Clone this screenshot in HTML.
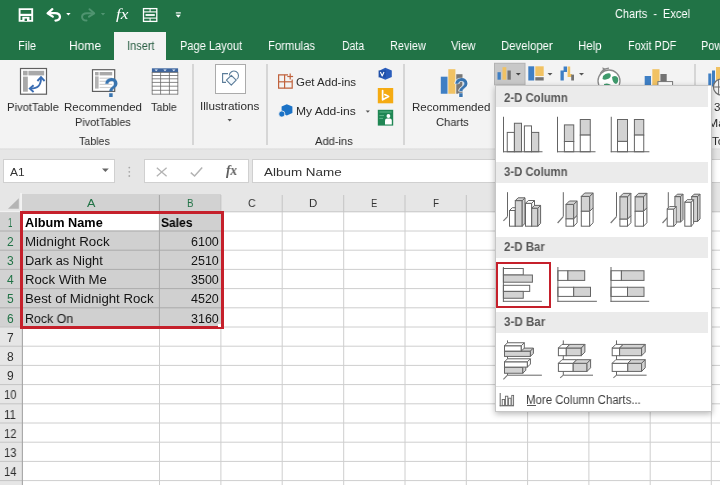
<!DOCTYPE html>
<html lang="en">
<head>
<meta charset="utf-8">
<title>Charts - Excel</title>
<style>
html,body{margin:0;padding:0;}
html{overflow:hidden;}
body{width:720px;height:485px;overflow:hidden;position:relative;background:#fff;font-family:"Liberation Sans",sans-serif;}
.a{position:absolute;}
.t{position:absolute;white-space:pre;line-height:1;transform-origin:0 0;display:block;will-change:transform;}
svg{position:absolute;overflow:visible;}
#top{left:0;top:0;width:720px;height:60px;background:#217346;}
#tab{left:114px;top:32px;width:52px;height:29px;background:#f3f3f3;}
#ribbon{left:0;top:60px;width:720px;height:88px;background:#f3f3f3;}
#rline{left:0;top:147.6px;width:720px;height:2.4px;background:linear-gradient(#ececec,#dedede 55%,#e4e4e4);}
#fbar{left:0;top:150px;width:720px;height:43px;background:#e6e6e6;}
.box{background:#fff;border:1px solid #d0d0d0;box-sizing:border-box;}
.sep{width:2px;background:#d6d6d6;top:64px;height:81px;}
#grid{left:0;top:193px;width:720px;height:292px;background:#fff;}
.vl{width:1px;background:#d9d9d9;top:211px;height:274px;}
.hl{height:1px;background:#d9d9d9;left:22px;width:698px;}
.ch{top:193px;height:18px;background:#e6e6e6;}
.rh{left:0;width:22px;background:#e6e6e6;}
#panel{left:494.5px;top:85.3px;width:217.5px;height:326.5px;background:#fff;border:1px solid #c6c6c6;box-sizing:border-box;box-shadow:0 2px 6px rgba(0,0,0,.28);}
.ph{left:495.5px;width:212px;height:20.8px;background:#ebebeb;}
</style>
</head>
<body>
<div id="top" class="a"></div>
<div id="tab" class="a"></div>
<div id="ribbon" class="a"></div>
<div id="rline" class="a"></div>
<div id="fbar" class="a"></div>

<!-- title + tabs -->
<span class="t" style="left:614.67px;top:8px;font-size:12.5px;color:#fff;transform:scaleX(0.8767);">Charts  -  Excel</span>
<span class="t" style="left:17.66px;top:40px;font-size:12.5px;color:#fff;transform:scaleX(0.8930);">File</span>
<span class="t" style="left:68.62px;top:40px;font-size:12.5px;color:#fff;transform:scaleX(0.9597);">Home</span>
<span class="t" style="left:126.67px;top:40px;font-size:12.5px;color:#2a5f44;transform:scaleX(0.8796);">Insert</span>
<span class="t" style="left:180.17px;top:40px;font-size:12.5px;color:#fff;transform:scaleX(0.8860);">Page Layout</span>
<span class="t" style="left:268.36px;top:40px;font-size:12.5px;color:#fff;transform:scaleX(0.9041);">Formulas</span>
<span class="t" style="left:341.60px;top:40px;font-size:12.5px;color:#fff;transform:scaleX(0.8369);">Data</span>
<span class="t" style="left:390.18px;top:40px;font-size:12.5px;color:#fff;transform:scaleX(0.8732);">Review</span>
<span class="t" style="left:451.15px;top:40px;font-size:12.5px;color:#fff;transform:scaleX(0.9116);">View</span>
<span class="t" style="left:500.96px;top:40px;font-size:12.5px;color:#fff;transform:scaleX(0.9073);">Developer</span>
<span class="t" style="left:577.65px;top:40px;font-size:12.5px;color:#fff;transform:scaleX(0.9176);">Help</span>
<span class="t" style="left:628.18px;top:40px;font-size:12.5px;color:#fff;transform:scaleX(0.8675);">Foxit PDF</span>
<span class="t" style="left:701.27px;top:40px;font-size:12.5px;color:#fff;transform:scaleX(0.8796);">Pow</span>

<!-- ribbon text -->
<span class="t" style="left:7.46px;top:102px;font-size:11.5px;color:#2b2b2b;transform:scaleX(0.9767);">PivotTable</span>
<span class="t" style="left:63.95px;top:102px;font-size:11.5px;color:#2b2b2b;">Recommended</span>
<span class="t" style="left:74.98px;top:117px;font-size:11.5px;color:#2b2b2b;transform:scaleX(0.9493);">PivotTables</span>
<span class="t" style="left:151.48px;top:102px;font-size:11.5px;color:#2b2b2b;transform:scaleX(0.9392);">Table</span>
<span class="t" style="left:78.99px;top:136px;font-size:11.5px;color:#2b2b2b;transform:scaleX(0.9272);">Tables</span>
<span class="t" style="left:199.94px;top:101px;font-size:11.5px;color:#2b2b2b;transform:scaleX(1.0199);">Illustrations</span>
<span class="t" style="left:295.95px;top:77px;font-size:11.5px;color:#2b2b2b;">Get Add-ins</span>
<span class="t" style="left:295.92px;top:106px;font-size:11.5px;color:#2b2b2b;transform:scaleX(1.0516);">My Add-ins</span>
<span class="t" style="left:315.46px;top:136px;font-size:11.5px;color:#2b2b2b;transform:scaleX(0.9699);">Add-ins</span>
<span class="t" style="left:412.45px;top:102px;font-size:11.5px;color:#2b2b2b;transform:scaleX(1.0044);">Recommended</span>
<span class="t" style="left:436.47px;top:117px;font-size:11.5px;color:#2b2b2b;transform:scaleX(0.9691);">Charts</span>
<div class="a sep" style="left:192px"></div>
<div class="a sep" style="left:266px"></div>
<div class="a sep" style="left:403px"></div>
<div class="a sep" style="left:694px;height:24px"></div>

<svg id="ric" width="720" height="160" viewBox="0 0 720 160" style="left:0;top:0"><path d="M19.6 9.1 H32.2 V20.9 H19.6 Z" fill="none" stroke="#fff" stroke-width="1.9" />
<line x1="19.60" y1="14.90" x2="32.20" y2="14.90" stroke="#fff" stroke-width="2.2" />
<rect x="22.30" y="16.80" width="7.20" height="4.20" fill="#fff" stroke="none" stroke-width="0" />
<rect x="24.60" y="18.60" width="2.40" height="2.40" fill="#217346" stroke="none" stroke-width="0" />
<path d="M52.3 9.2 L47.6 13.3 L52.8 16.6" fill="none" stroke="#fff" stroke-width="2.3" stroke-linecap="round" stroke-linejoin="round"/>
<path d="M48.5 13.2 H55 C61.5 13.2 61.5 20.6 55.5 20.6" fill="none" stroke="#fff" stroke-width="2.3" stroke-linecap="round"/>
<polygon points="66.20,13.10 70.60,13.10 68.40,15.50" fill="#fff" stroke="none" stroke-width="0" stroke-linejoin="round" />
<path d="M89.5 9.2 L94.2 13.3 L89 16.6" fill="none" stroke="#4f9470" stroke-width="2" stroke-linecap="round" stroke-linejoin="round"/>
<path d="M93.3 13.2 H87 C80.5 13.2 80.5 20.6 86.5 20.6" fill="none" stroke="#4f9470" stroke-width="2" stroke-linecap="round"/>
<polygon points="100.80,13.10 105.20,13.10 103.00,15.50" fill="#4f9470" stroke="none" stroke-width="0" stroke-linejoin="round" />
<rect x="143.50" y="8.60" width="13.30" height="12.80" fill="none" stroke="#fff" stroke-width="1.3" />
<line x1="143.50" y1="11.90" x2="156.80" y2="11.90" stroke="#fff" stroke-width="1.1" />
<line x1="143.50" y1="18.10" x2="156.80" y2="18.10" stroke="#fff" stroke-width="1.1" />
<line x1="145.50" y1="15.00" x2="154.80" y2="15.00" stroke="#fff" stroke-width="1.8" />
<line x1="150.10" y1="8.60" x2="150.10" y2="11.90" stroke="#fff" stroke-width="1" />
<line x1="150.10" y1="18.10" x2="150.10" y2="21.40" stroke="#fff" stroke-width="1" />
<line x1="175.80" y1="12.90" x2="180.80" y2="12.90" stroke="#fff" stroke-width="1.2" />
<polygon points="175.80,14.80 180.80,14.80 178.30,17.80" fill="#fff" stroke="none" stroke-width="0" stroke-linejoin="round" />
<rect x="20.50" y="68.50" width="26.00" height="25.70" fill="#fff" stroke="#5f5f5f" stroke-width="1.2" />
<rect x="23.00" y="70.80" width="4.60" height="4.60" fill="#a9a9a9" stroke="none" stroke-width="0" />
<rect x="28.40" y="70.80" width="15.80" height="4.60" fill="#a9a9a9" stroke="none" stroke-width="0" />
<rect x="23.00" y="76.60" width="4.80" height="15.10" fill="#a9a9a9" stroke="none" stroke-width="0" />
<path d="M30.6 88.6 C38.5 88.6 41 85 41 78" fill="none" stroke="#3a6db3" stroke-width="1.9" />
<path d="M33.6 85.2 L29.8 88.6 L33.6 92" fill="none" stroke="#3a6db3" stroke-width="1.9" stroke-linejoin="miter"/>
<path d="M37.4 81 L41 77.2 L44.6 81" fill="none" stroke="#3a6db3" stroke-width="1.9" stroke-linejoin="miter"/>
<rect x="92.50" y="69.70" width="22.20" height="21.70" fill="#fff" stroke="#5f5f5f" stroke-width="1.2" />
<rect x="95.00" y="72.00" width="3.60" height="3.40" fill="#a9a9a9" stroke="none" stroke-width="0" />
<rect x="99.60" y="72.00" width="12.60" height="3.40" fill="#a9a9a9" stroke="none" stroke-width="0" />
<rect x="95.00" y="76.40" width="3.60" height="12.20" fill="#b4b4b4" stroke="none" stroke-width="0" />
<line x1="99.60" y1="78.20" x2="112.20" y2="78.20" stroke="#d0d0d0" stroke-width="1.2" />
<line x1="99.60" y1="81.30" x2="112.20" y2="81.30" stroke="#d0d0d0" stroke-width="1.2" />
<line x1="99.60" y1="84.40" x2="112.20" y2="84.40" stroke="#d0d0d0" stroke-width="1.2" />
<line x1="99.60" y1="87.50" x2="112.20" y2="87.50" stroke="#d0d0d0" stroke-width="1.2" />
<rect x="151.90" y="68.30" width="26.20" height="26.00" fill="#fff" stroke="none" stroke-width="0" />
<rect x="151.90" y="68.30" width="26.20" height="4.10" fill="#3d659f" stroke="none" stroke-width="0" />
<polygon points="154.50,69.40 157.90,69.40 156.20,71.20" fill="#e8eef6" stroke="none" stroke-width="0" stroke-linejoin="round" />
<polygon points="163.30,69.40 166.70,69.40 165.00,71.20" fill="#e8eef6" stroke="none" stroke-width="0" stroke-linejoin="round" />
<polygon points="172.10,69.40 175.50,69.40 173.80,71.20" fill="#e8eef6" stroke="none" stroke-width="0" stroke-linejoin="round" />
<line x1="151.90" y1="72.40" x2="178.10" y2="72.40" stroke="#6a6a6a" stroke-width="0.8" />
<line x1="151.90" y1="75.50" x2="178.10" y2="75.50" stroke="#6a6a6a" stroke-width="0.8" />
<line x1="151.90" y1="78.80" x2="178.10" y2="78.80" stroke="#6a6a6a" stroke-width="0.8" />
<line x1="151.90" y1="82.40" x2="178.10" y2="82.40" stroke="#6a6a6a" stroke-width="0.8" />
<line x1="151.90" y1="86.20" x2="178.10" y2="86.20" stroke="#6a6a6a" stroke-width="0.8" />
<line x1="151.90" y1="90.30" x2="178.10" y2="90.30" stroke="#6a6a6a" stroke-width="0.8" />
<line x1="151.90" y1="94.20" x2="178.10" y2="94.20" stroke="#6a6a6a" stroke-width="0.8" />
<line x1="152.20" y1="72.00" x2="152.20" y2="94.40" stroke="#6a6a6a" stroke-width="0.8" />
<line x1="160.60" y1="72.00" x2="160.60" y2="94.40" stroke="#6a6a6a" stroke-width="0.8" />
<line x1="169.40" y1="72.00" x2="169.40" y2="94.40" stroke="#6a6a6a" stroke-width="0.8" />
<line x1="177.80" y1="72.00" x2="177.80" y2="94.40" stroke="#6a6a6a" stroke-width="0.8" />
<rect x="215.50" y="64.50" width="30.00" height="29.00" fill="#fff" stroke="#ababab" stroke-width="1" />
<path d="M228 73.6 H222.6 V82.4 H226" fill="none" stroke="#5b7c99" stroke-width="1.1" />
<path d="M229.3 75.6 A4.6 4.6 0 1 1 236.6 79.4" fill="none" stroke="#5b7c99" stroke-width="1.1" />
<polygon points="231.30,75.30 236.20,80.20 231.30,85.10 226.40,80.20" fill="#f4f9fd" stroke="#5b7c99" stroke-width="1.1" stroke-linejoin="round" />
<polygon points="227.50,119.00 231.90,119.00 229.70,121.40" fill="#555" stroke="none" stroke-width="0" stroke-linejoin="round" />
<path d="M288 74.8 H278.6 V88.2 H292.2 V79.5" fill="none" stroke="#c0623c" stroke-width="1.2" />
<line x1="284.60" y1="74.80" x2="284.60" y2="88.20" stroke="#c0623c" stroke-width="1.2" />
<line x1="278.60" y1="81.80" x2="292.20" y2="81.80" stroke="#c0623c" stroke-width="1.2" />
<line x1="290.20" y1="73.60" x2="290.20" y2="79.40" stroke="#c0623c" stroke-width="1.2" />
<line x1="287.30" y1="76.50" x2="293.10" y2="76.50" stroke="#c0623c" stroke-width="1.2" />
<polygon points="286.80,104.20 292.40,106.60 292.40,113.00 286.80,115.60 281.60,113.00 281.60,106.60" fill="#1b72c6" stroke="none" stroke-width="0" stroke-linejoin="round" />
<circle cx="281.8" cy="114" r="3.1" fill="#1b72c6" stroke="#f3f3f3" stroke-width="0.8"/>
<polygon points="365.70,110.40 369.90,110.40 367.80,112.80" fill="#555" stroke="none" stroke-width="0" stroke-linejoin="round" />
<polygon points="385.30,67.80 391.80,70.50 391.80,77.00 385.30,79.80 380.20,77.40 380.20,70.20" fill="#2a5dbb" stroke="none" stroke-width="0" stroke-linejoin="round" />
<rect x="378.60" y="70.40" width="7.20" height="7.00" fill="#1f4fa8" stroke="none" stroke-width="0" />
<path d="M380.4 72 L382.2 76 L384 72" fill="none" stroke="#fff" stroke-width="1.1" stroke-linejoin="round"/>
<rect x="377.80" y="88.00" width="15.40" height="15.30" fill="#f5ab12" stroke="none" stroke-width="0" />
<path d="M382.6 90.6 V99.8 L388.6 96.6 L384.8 94.6" fill="none" stroke="#fff" stroke-width="1.7" stroke-linejoin="round" stroke-linecap="round"/>
<rect x="377.80" y="109.80" width="15.40" height="15.80" fill="#1f8653" stroke="none" stroke-width="0" />
<line x1="379.40" y1="112.00" x2="391.60" y2="112.00" stroke="#5fb88a" stroke-width="1" />
<line x1="379.40" y1="115.60" x2="384.00" y2="115.60" stroke="#5fb88a" stroke-width="1" />
<line x1="379.40" y1="118.40" x2="383.00" y2="118.40" stroke="#5fb88a" stroke-width="1" />
<circle cx="388.4" cy="116" r="1.9" fill="#fff"/>
<path d="M385 124.6 V120.6 Q385 118.6 387 118.6 H389.8 Q391.8 118.6 391.8 120.6 V124.6 Z" fill="#fff" stroke="none" stroke-width="1" />
<rect x="440.80" y="76.70" width="6.70" height="17.05" fill="#3f7fc4" stroke="none" stroke-width="0" />
<rect x="448.30" y="69.20" width="7.10" height="24.55" fill="#f1c263" stroke="none" stroke-width="0" />
<rect x="456.25" y="74.20" width="6.25" height="19.55" fill="#777" stroke="none" stroke-width="0" />
<rect x="494.50" y="63.30" width="30.50" height="21.50" fill="#c8c8c8" stroke="#b2b2b2" stroke-width="1" />
<rect x="497.50" y="72.20" width="3.30" height="7.50" fill="#3f7fc4" stroke="none" stroke-width="0" />
<rect x="502.50" y="67.20" width="3.80" height="12.50" fill="#f1c263" stroke="none" stroke-width="0" />
<rect x="507.50" y="70.50" width="3.30" height="9.20" fill="#737373" stroke="none" stroke-width="0" />
<polygon points="515.80,73.00 520.80,73.00 518.30,75.60" fill="#444" stroke="none" stroke-width="0" stroke-linejoin="round" />
<rect x="528.30" y="66.30" width="5.90" height="14.20" fill="#3f7fc4" stroke="none" stroke-width="0" />
<rect x="535.30" y="66.30" width="8.40" height="9.70" fill="#f1c263" stroke="none" stroke-width="0" />
<rect x="535.30" y="77.20" width="8.40" height="3.30" fill="#737373" stroke="none" stroke-width="0" />
<polygon points="547.50,73.00 552.50,73.00 550.00,75.60" fill="#555" stroke="none" stroke-width="0" stroke-linejoin="round" />
<path d="M560.5 80.5 V70.6 H563.6 V66.6 H567 V72 H563.8 V80.5 Z" fill="#3f7fc4" stroke="none" stroke-width="1" />
<path d="M567.6 66.6 H570.2 V74 H572 V77 H567.6 Z" fill="#f1c263" stroke="none" stroke-width="1" />
<rect x="571.20" y="74.60" width="2.80" height="5.90" fill="#737373" stroke="none" stroke-width="0" />
<polygon points="579.00,73.00 584.00,73.00 581.50,75.60" fill="#555" stroke="none" stroke-width="0" stroke-linejoin="round" />
<g>
<circle cx="609" cy="81" r="11" fill="#fff" stroke="#8a8a8a" stroke-width="1.3"/>
<path d="M603 76 Q606 72.5 610 73.5 Q612 76 609 78.5 Q605 80.5 602.5 79 Z" fill="#3f9a6c" stroke="none" stroke-width="1" />
<path d="M612 77 Q616 74.5 618 78 Q619 82 616 84 Q612.5 83 612 77 Z" fill="#3f9a6c" stroke="none" stroke-width="1" />
<path d="M604 84 Q608 82.5 611 85 L610 88 H604.5 Z" fill="#3f9a6c" stroke="none" stroke-width="1" />
<path d="M600.2 73.6 Q603.5 68.4 609 68.2" fill="none" stroke="#8a8a8a" stroke-width="1.2" />
<polygon points="602.40,67.20 606.00,69.00 603.00,71.20" fill="#8a8a8a" stroke="none" stroke-width="0" stroke-linejoin="round" />
</g>
<rect x="644.70" y="76.00" width="6.30" height="10.50" fill="#3f7fc4" stroke="none" stroke-width="0" />
<rect x="652.30" y="69.20" width="7.20" height="17.30" fill="#f1c263" stroke="none" stroke-width="0" />
<rect x="660.40" y="74.00" width="6.30" height="8.00" fill="#737373" stroke="none" stroke-width="0" />
<rect x="657.90" y="81.60" width="14.70" height="5.40" fill="#fff" stroke="#777" stroke-width="1" />
<rect x="708.30" y="73.50" width="3.00" height="13.00" fill="#3f7fc4" stroke="none" stroke-width="0" />
<rect x="712.00" y="70.50" width="3.00" height="16.00" fill="#3f7fc4" stroke="none" stroke-width="0" />
<rect x="716.00" y="67.00" width="4.00" height="13.00" fill="#f1c263" stroke="none" stroke-width="0" />
<circle cx="721.6" cy="87" r="8.2" fill="#f2f2f2" stroke="#6e6e6e" stroke-width="1.2"/>
<line x1="714.00" y1="87.00" x2="720.00" y2="87.00" stroke="#6e6e6e" stroke-width="1" />
<line x1="718.60" y1="80.00" x2="718.60" y2="94.00" stroke="#6e6e6e" stroke-width="1" /></svg>
<span class="t" style="left:104.44px;top:74px;font-size:28px;color:#3874b0;font-weight:700;transform:scaleX(0.8660);">?</span>
<span class="t" style="left:454.04px;top:74px;font-size:28px;color:#3874b0;font-weight:700;transform:scaleX(0.8660);text-shadow:0 0 1px #fff,0 0 1px #fff,1px 0 0 #fff,-1px 0 0 #fff;">?</span>
<span class="t" style="left:714.27px;top:102px;font-size:11.5px;color:#2b2b2b;transform:scaleX(0.9541);">3D</span>
<span class="t" style="left:708.41px;top:118px;font-size:11.5px;color:#2b2b2b;transform:scaleX(1.0649);">Map</span>
<span class="t" style="left:712.05px;top:136px;font-size:11.5px;color:#2b2b2b;">Tours</span>
<span class="t" style="left:115.57px;top:7px;font-size:15px;color:#fff;transform:scaleX(1.1526);font-family:'Liberation Serif',serif;font-style:italic;">fx</span>
<!-- formula bar -->
<div class="a box" style="left:3.3px;top:159px;width:111.4px;height:24.4px"></div>
<div class="a box" style="left:144.2px;top:159px;width:105px;height:24.4px"></div>
<div class="a box" style="left:252.4px;top:159px;width:470px;height:24.4px"></div>
<span class="t" style="left:9.83px;top:167px;font-size:11.5px;color:#333;transform:scaleX(1.0391);">A1</span>
<span class="t" style="left:263.86px;top:167px;font-size:11.5px;color:#333;transform:scaleX(1.1679);">Album Name</span>

<svg width="260" height="40" viewBox="0 150 260 40" style="left:0;top:150px">
<polygon points="102,168.4 108.8,168.4 105.4,172" fill="#666"/>
<circle cx="129.3" cy="167.6" r="0.9" fill="#a8a8a8"/><circle cx="129.3" cy="171.8" r="0.9" fill="#a8a8a8"/><circle cx="129.3" cy="176" r="0.9" fill="#a8a8a8"/>
<path d="M156.8 167.8 L166.6 176.2 M166.6 167.8 L156.8 176.2" stroke="#b3b3b3" stroke-width="1.3" fill="none"/>
<path d="M190.8 172.6 L194.6 176 L202.2 167.4" stroke="#b3b3b3" stroke-width="1.5" fill="none"/>
</svg>
<span class="t" style="left:225.67px;top:164px;font-size:14px;color:#5a5a5a;font-weight:700;transform:scaleX(0.9346);font-family:'Liberation Serif',serif;font-style:italic;">fx</span>
<!-- grid -->
<div id="grid" class="a"></div>
<div class="a" style="left:0;top:193px;width:720px;height:19px;background:#e6e6e6"></div>
<div class="a" style="left:22px;top:193.5px;width:199px;height:18.5px;background:#d2d2d2"></div>
<div class="a" style="left:0;top:212px;width:22px;height:273px;background:#e6e6e6"></div>
<div class="a" style="left:0;top:212px;width:22px;height:115.0px;background:#d2d2d2"></div>
<div class="a" style="left:22px;top:212px;width:199px;height:115.0px;background:#d0d0d0"></div>
<div class="a" style="left:22px;top:212px;width:137.5px;height:19.0px;background:#fff"></div>
<svg width="720" height="292" viewBox="0 193 720 292" style="left:0;top:193px">
<polygon points="8,208.8 18.8,208.8 18.8,198.2" fill="#b4b4b4"/>
<line x1="21" y1="193" x2="21" y2="211" stroke="#f6f6f6" stroke-width="1.4"/>
<line x1="159.5" y1="212" x2="159.5" y2="485" stroke="#cecece" stroke-width="1"/>
<line x1="159.5" y1="195" x2="159.5" y2="212" stroke="#c4c4c4" stroke-width="1"/>
<line x1="220.9" y1="212" x2="220.9" y2="485" stroke="#cecece" stroke-width="1"/>
<line x1="220.9" y1="195" x2="220.9" y2="212" stroke="#c4c4c4" stroke-width="1"/>
<line x1="282.2" y1="212" x2="282.2" y2="485" stroke="#cecece" stroke-width="1"/>
<line x1="282.2" y1="195" x2="282.2" y2="212" stroke="#c4c4c4" stroke-width="1"/>
<line x1="343.7" y1="212" x2="343.7" y2="485" stroke="#cecece" stroke-width="1"/>
<line x1="343.7" y1="195" x2="343.7" y2="212" stroke="#c4c4c4" stroke-width="1"/>
<line x1="405.0" y1="212" x2="405.0" y2="485" stroke="#cecece" stroke-width="1"/>
<line x1="405.0" y1="195" x2="405.0" y2="212" stroke="#c4c4c4" stroke-width="1"/>
<line x1="466.3" y1="212" x2="466.3" y2="485" stroke="#cecece" stroke-width="1"/>
<line x1="466.3" y1="195" x2="466.3" y2="212" stroke="#c4c4c4" stroke-width="1"/>
<line x1="527.6" y1="212" x2="527.6" y2="485" stroke="#cecece" stroke-width="1"/>
<line x1="527.6" y1="195" x2="527.6" y2="212" stroke="#c4c4c4" stroke-width="1"/>
<line x1="588.9" y1="212" x2="588.9" y2="485" stroke="#cecece" stroke-width="1"/>
<line x1="588.9" y1="195" x2="588.9" y2="212" stroke="#c4c4c4" stroke-width="1"/>
<line x1="650.2" y1="212" x2="650.2" y2="485" stroke="#cecece" stroke-width="1"/>
<line x1="650.2" y1="195" x2="650.2" y2="212" stroke="#c4c4c4" stroke-width="1"/>
<line x1="711.3" y1="212" x2="711.3" y2="485" stroke="#cecece" stroke-width="1"/>
<line x1="711.3" y1="195" x2="711.3" y2="212" stroke="#c4c4c4" stroke-width="1"/>
<line x1="22" y1="231.00" x2="720" y2="231.00" stroke="#cecece" stroke-width="1"/>
<line x1="0" y1="231.00" x2="22" y2="231.00" stroke="#c4c4c4" stroke-width="1"/>
<line x1="22" y1="250.20" x2="720" y2="250.20" stroke="#cecece" stroke-width="1"/>
<line x1="0" y1="250.20" x2="22" y2="250.20" stroke="#c4c4c4" stroke-width="1"/>
<line x1="22" y1="269.40" x2="720" y2="269.40" stroke="#cecece" stroke-width="1"/>
<line x1="0" y1="269.40" x2="22" y2="269.40" stroke="#c4c4c4" stroke-width="1"/>
<line x1="22" y1="288.60" x2="720" y2="288.60" stroke="#cecece" stroke-width="1"/>
<line x1="0" y1="288.60" x2="22" y2="288.60" stroke="#c4c4c4" stroke-width="1"/>
<line x1="22" y1="307.80" x2="720" y2="307.80" stroke="#cecece" stroke-width="1"/>
<line x1="0" y1="307.80" x2="22" y2="307.80" stroke="#c4c4c4" stroke-width="1"/>
<line x1="22" y1="327.00" x2="720" y2="327.00" stroke="#cecece" stroke-width="1"/>
<line x1="0" y1="327.00" x2="22" y2="327.00" stroke="#c4c4c4" stroke-width="1"/>
<line x1="22" y1="346.20" x2="720" y2="346.20" stroke="#cecece" stroke-width="1"/>
<line x1="0" y1="346.20" x2="22" y2="346.20" stroke="#c4c4c4" stroke-width="1"/>
<line x1="22" y1="365.40" x2="720" y2="365.40" stroke="#cecece" stroke-width="1"/>
<line x1="0" y1="365.40" x2="22" y2="365.40" stroke="#c4c4c4" stroke-width="1"/>
<line x1="22" y1="384.60" x2="720" y2="384.60" stroke="#cecece" stroke-width="1"/>
<line x1="0" y1="384.60" x2="22" y2="384.60" stroke="#c4c4c4" stroke-width="1"/>
<line x1="22" y1="403.80" x2="720" y2="403.80" stroke="#cecece" stroke-width="1"/>
<line x1="0" y1="403.80" x2="22" y2="403.80" stroke="#c4c4c4" stroke-width="1"/>
<line x1="22" y1="423.00" x2="720" y2="423.00" stroke="#cecece" stroke-width="1"/>
<line x1="0" y1="423.00" x2="22" y2="423.00" stroke="#c4c4c4" stroke-width="1"/>
<line x1="22" y1="442.20" x2="720" y2="442.20" stroke="#cecece" stroke-width="1"/>
<line x1="0" y1="442.20" x2="22" y2="442.20" stroke="#c4c4c4" stroke-width="1"/>
<line x1="22" y1="461.40" x2="720" y2="461.40" stroke="#cecece" stroke-width="1"/>
<line x1="0" y1="461.40" x2="22" y2="461.40" stroke="#c4c4c4" stroke-width="1"/>
<line x1="22" y1="480.60" x2="720" y2="480.60" stroke="#cecece" stroke-width="1"/>
<line x1="0" y1="480.60" x2="22" y2="480.60" stroke="#c4c4c4" stroke-width="1"/>
<line x1="22" y1="499.80" x2="720" y2="499.80" stroke="#cecece" stroke-width="1"/>
<line x1="0" y1="499.80" x2="22" y2="499.80" stroke="#c4c4c4" stroke-width="1"/>
<line x1="22" y1="211.8" x2="720" y2="211.8" stroke="#c6c6c6" stroke-width="1"/>
<line x1="0" y1="211.4" x2="20" y2="211.4" stroke="#f2f2f2" stroke-width="1.4"/>
<line x1="22" y1="231.00" x2="221" y2="231.00" stroke="#acacac" stroke-width="1"/>
<line x1="0" y1="231.00" x2="20" y2="231.00" stroke="#b4b4b4" stroke-width="1"/>
<line x1="22" y1="250.20" x2="221" y2="250.20" stroke="#acacac" stroke-width="1"/>
<line x1="0" y1="250.20" x2="20" y2="250.20" stroke="#b4b4b4" stroke-width="1"/>
<line x1="22" y1="269.40" x2="221" y2="269.40" stroke="#acacac" stroke-width="1"/>
<line x1="0" y1="269.40" x2="20" y2="269.40" stroke="#b4b4b4" stroke-width="1"/>
<line x1="22" y1="288.60" x2="221" y2="288.60" stroke="#acacac" stroke-width="1"/>
<line x1="0" y1="288.60" x2="20" y2="288.60" stroke="#b4b4b4" stroke-width="1"/>
<line x1="22" y1="307.80" x2="221" y2="307.80" stroke="#acacac" stroke-width="1"/>
<line x1="0" y1="307.80" x2="20" y2="307.80" stroke="#b4b4b4" stroke-width="1"/>
<line x1="159.4" y1="195" x2="159.4" y2="327.0" stroke="#a6a6a6" stroke-width="1"/>
<line x1="22.4" y1="327.0" x2="22.4" y2="485" stroke="#a6a6a6" stroke-width="1.1"/>
</svg>
<span class="t" style="left:86.59px;top:198px;font-size:11.5px;color:#217346;transform:scaleX(1.0986);">A</span>
<span class="t" style="left:186.82px;top:198px;font-size:11.5px;color:#217346;transform:scaleX(0.8639);">B</span>
<span class="t" style="left:247.69px;top:198px;font-size:11.5px;color:#333;transform:scaleX(0.9177);">C</span>
<span class="t" style="left:308.76px;top:198px;font-size:11.5px;color:#333;transform:scaleX(0.9778);">D</span>
<span class="t" style="left:371.25px;top:198px;font-size:11.5px;color:#333;transform:scaleX(0.8118);">E</span>
<span class="t" style="left:432.53px;top:198px;font-size:11.5px;color:#333;transform:scaleX(0.8573);">F</span>
<span class="t" style="left:496.18px;top:198px;font-size:11.5px;color:#333;transform:scaleX(0.9413);">G</span>
<span class="t" style="left:554.06px;top:198px;font-size:11.5px;color:#333;transform:scaleX(0.9778);">H</span>
<span class="t" style="left:618.01px;top:198px;font-size:11.5px;color:#333;transform:scaleX(0.8829);">I</span>
<span class="t" style="left:678.34px;top:198px;font-size:11.5px;color:#333;transform:scaleX(0.8397);">J</span>
<span class="t" style="left:8.33px;top:217px;font-size:12px;color:#217346;transform:scaleX(0.6376);">1</span>
<span class="t" style="left:7.04px;top:236px;font-size:12px;color:#217346;transform:scaleX(0.9666);">2</span>
<span class="t" style="left:7.04px;top:255px;font-size:12px;color:#217346;transform:scaleX(0.9666);">3</span>
<span class="t" style="left:7.04px;top:274px;font-size:12px;color:#217346;transform:scaleX(0.9666);">4</span>
<span class="t" style="left:7.04px;top:293px;font-size:12px;color:#217346;transform:scaleX(0.9666);">5</span>
<span class="t" style="left:7.04px;top:313px;font-size:12px;color:#217346;transform:scaleX(0.9666);">6</span>
<span class="t" style="left:7.04px;top:332px;font-size:12px;color:#2e2e2e;transform:scaleX(0.9666);">7</span>
<span class="t" style="left:7.04px;top:351px;font-size:12px;color:#2e2e2e;transform:scaleX(0.9666);">8</span>
<span class="t" style="left:7.04px;top:370px;font-size:12px;color:#2e2e2e;transform:scaleX(0.9666);">9</span>
<span class="t" style="left:4.06px;top:389px;font-size:12px;color:#2e2e2e;transform:scaleX(0.9330);">10</span>
<span class="t" style="left:4.35px;top:409px;font-size:12px;color:#2e2e2e;transform:scaleX(0.9515);">11</span>
<span class="t" style="left:4.06px;top:428px;font-size:12px;color:#2e2e2e;transform:scaleX(0.9330);">12</span>
<span class="t" style="left:4.06px;top:447px;font-size:12px;color:#2e2e2e;transform:scaleX(0.9330);">13</span>
<span class="t" style="left:4.06px;top:466px;font-size:12px;color:#2e2e2e;transform:scaleX(0.9330);">14</span>
<div class="a" style="left:20px;top:210.7px;width:203.7px;height:118.8px;border:3px solid #c5202b;box-sizing:border-box"></div>
<div class="a" style="left:218.2px;top:324.2px;width:2.6px;height:2.4px;background:#fff"></div>

<!-- cell text -->
<span class="t" style="left:24.79px;top:217px;font-size:12.5px;color:#000;font-weight:700;transform:scaleX(1.0169);">Album Name</span>
<span class="t" style="left:161.42px;top:217px;font-size:12.5px;color:#000;font-weight:700;transform:scaleX(0.9641);">Sales</span>
<span class="t" style="left:24.66px;top:236px;font-size:12.5px;color:#141414;transform:scaleX(1.0681);">Midnight Rock</span>
<span class="t" style="left:24.68px;top:255px;font-size:12.5px;color:#141414;transform:scaleX(1.0273);">Dark as Night</span>
<span class="t" style="left:24.67px;top:274px;font-size:12.5px;color:#141414;transform:scaleX(1.0527);">Rock With Me</span>
<span class="t" style="left:24.67px;top:293px;font-size:12.5px;color:#141414;transform:scaleX(1.0576);">Best of Midnight Rock</span>
<span class="t" style="left:24.71px;top:313px;font-size:12.5px;color:#141414;transform:scaleX(0.9889);">Rock On</span>
<span class="t" style="left:191.41px;top:236px;font-size:12.5px;color:#141414;transform:scaleX(0.9888);">6100</span>
<span class="t" style="left:191.41px;top:255px;font-size:12.5px;color:#141414;transform:scaleX(0.9888);">2510</span>
<span class="t" style="left:191.41px;top:274px;font-size:12.5px;color:#141414;transform:scaleX(0.9888);">3500</span>
<span class="t" style="left:191.41px;top:293px;font-size:12.5px;color:#141414;transform:scaleX(0.9888);">4520</span>
<span class="t" style="left:191.41px;top:313px;font-size:12.5px;color:#141414;transform:scaleX(0.9888);">3160</span>

<!-- panel -->
<div id="panel" class="a"></div>
<div class="a ph" style="top:86px;height:21.3px"></div>
<div class="a ph" style="top:162px"></div>
<div class="a ph" style="top:237px"></div>
<div class="a ph" style="top:311.8px"></div>
<span class="t" style="left:504.05px;top:92px;font-size:12px;color:#585858;font-weight:700;transform:scaleX(0.9468);">2-D Column</span>
<span class="t" style="left:504.26px;top:166px;font-size:12px;color:#585858;font-weight:700;transform:scaleX(0.9439);">3-D Column</span>
<span class="t" style="left:504.25px;top:241px;font-size:12px;color:#585858;font-weight:700;transform:scaleX(0.9573);">2-D Bar</span>
<span class="t" style="left:504.24px;top:316px;font-size:12px;color:#585858;font-weight:700;transform:scaleX(0.9667);">3-D Bar</span>
<div class="a" style="left:496px;top:386px;width:215px;height:1px;background:#e1e1e1"></div>
<span class="t" style="left:526.25px;top:394px;font-size:12px;color:#3c3c3c;transform:scaleX(0.9516);">More Column Charts...</span>
<div class="a" style="left:527px;top:405px;width:9.4px;height:1px;background:#555"></div>
<div class="a" style="left:496px;top:262px;width:55px;height:45.6px;border:2.2px solid #c5202b;box-sizing:border-box"></div>
<svg id="pic" width="720" height="485" viewBox="0 0 720 485" style="left:0;top:0"><rect x="507.25" y="132.40" width="7.15" height="19.35" fill="#fff" stroke="#646464" stroke-width="1" />
<rect x="514.40" y="123.25" width="7.10" height="28.50" fill="#d3d3d3" stroke="#646464" stroke-width="1" />
<rect x="524.40" y="125.90" width="7.10" height="25.85" fill="#fff" stroke="#646464" stroke-width="1" />
<rect x="531.50" y="132.40" width="7.25" height="19.35" fill="#d3d3d3" stroke="#646464" stroke-width="1" />
<line x1="503.50" y1="116.75" x2="503.50" y2="152.25" stroke="#646464" stroke-width="1" />
<line x1="503.00" y1="151.75" x2="542.50" y2="151.75" stroke="#646464" stroke-width="1" />
<rect x="564.40" y="124.90" width="9.35" height="16.60" fill="#d3d3d3" stroke="#646464" stroke-width="1" />
<rect x="564.40" y="141.50" width="9.35" height="10.25" fill="#fff" stroke="#646464" stroke-width="1" />
<rect x="580.25" y="119.50" width="10.00" height="15.60" fill="#d3d3d3" stroke="#646464" stroke-width="1" />
<rect x="580.25" y="135.10" width="10.00" height="16.65" fill="#fff" stroke="#646464" stroke-width="1" />
<line x1="557.50" y1="116.75" x2="557.50" y2="152.25" stroke="#646464" stroke-width="1" />
<line x1="557.00" y1="151.75" x2="595.50" y2="151.75" stroke="#646464" stroke-width="1" />
<rect x="617.50" y="119.50" width="10.00" height="21.90" fill="#d3d3d3" stroke="#646464" stroke-width="1" />
<rect x="617.50" y="141.40" width="10.00" height="10.35" fill="#fff" stroke="#646464" stroke-width="1" />
<rect x="634.40" y="119.50" width="9.35" height="15.60" fill="#d3d3d3" stroke="#646464" stroke-width="1" />
<rect x="634.40" y="135.10" width="9.35" height="16.65" fill="#fff" stroke="#646464" stroke-width="1" />
<line x1="611.25" y1="116.75" x2="611.25" y2="152.25" stroke="#646464" stroke-width="1" />
<line x1="610.75" y1="151.75" x2="649.40" y2="151.75" stroke="#646464" stroke-width="1" />
<line x1="507.50" y1="192.20" x2="507.50" y2="216.60" stroke="#666" stroke-width="1" />
<line x1="507.50" y1="216.60" x2="503.40" y2="220.80" stroke="#777" stroke-width="1.2" />
<rect x="509.50" y="210.50" width="5.80" height="15.70" fill="#fff" stroke="#646464" stroke-width="1" />
<polygon points="515.30,210.50 518.10,207.70 518.10,223.40 515.30,226.20" fill="#fff" stroke="#646464" stroke-width="1" stroke-linejoin="round" />
<polygon points="509.50,210.50 512.30,207.70 518.10,207.70 515.30,210.50" fill="#fff" stroke="#646464" stroke-width="1" stroke-linejoin="round" />
<rect x="515.30" y="200.60" width="6.90" height="25.60" fill="#d3d3d3" stroke="#646464" stroke-width="1" />
<polygon points="522.20,200.60 525.00,197.80 525.00,223.40 522.20,226.20" fill="#d3d3d3" stroke="#646464" stroke-width="1" stroke-linejoin="round" />
<polygon points="515.30,200.60 518.10,197.80 525.00,197.80 522.20,200.60" fill="#d3d3d3" stroke="#646464" stroke-width="1" stroke-linejoin="round" />
<rect x="525.50" y="203.30" width="6.20" height="22.90" fill="#fff" stroke="#646464" stroke-width="1" />
<polygon points="531.70,203.30 534.50,200.50 534.50,223.40 531.70,226.20" fill="#fff" stroke="#646464" stroke-width="1" stroke-linejoin="round" />
<polygon points="525.50,203.30 528.30,200.50 534.50,200.50 531.70,203.30" fill="#fff" stroke="#646464" stroke-width="1" stroke-linejoin="round" />
<rect x="531.70" y="208.20" width="6.10" height="18.00" fill="#d3d3d3" stroke="#646464" stroke-width="1" />
<polygon points="537.80,208.20 540.60,205.40 540.60,223.40 537.80,226.20" fill="#d3d3d3" stroke="#646464" stroke-width="1" stroke-linejoin="round" />
<polygon points="531.70,208.20 534.50,205.40 540.60,205.40 537.80,208.20" fill="#d3d3d3" stroke="#646464" stroke-width="1" stroke-linejoin="round" />
<line x1="563.30" y1="192.20" x2="563.30" y2="216.60" stroke="#666" stroke-width="1" />
<line x1="563.30" y1="216.60" x2="557.60" y2="223.00" stroke="#777" stroke-width="1.2" />
<rect x="566.00" y="204.40" width="7.70" height="14.50" fill="#d3d3d3" stroke="#646464" stroke-width="1" />
<rect x="566.00" y="218.90" width="7.70" height="7.30" fill="#fff" stroke="#646464" stroke-width="1" />
<polygon points="573.70,204.40 577.10,201.00 577.10,215.50 573.70,218.90" fill="#d3d3d3" stroke="#646464" stroke-width="1" stroke-linejoin="round" />
<polygon points="573.70,218.90 577.10,215.50 577.10,222.80 573.70,226.20" fill="#fff" stroke="#646464" stroke-width="1" stroke-linejoin="round" />
<polygon points="566.00,204.40 569.40,201.00 577.10,201.00 573.70,204.40" fill="#d3d3d3" stroke="#646464" stroke-width="1" stroke-linejoin="round" />
<rect x="581.30" y="196.40" width="8.40" height="14.90" fill="#d3d3d3" stroke="#646464" stroke-width="1" />
<rect x="581.30" y="211.30" width="8.40" height="14.90" fill="#fff" stroke="#646464" stroke-width="1" />
<polygon points="589.70,196.40 593.10,193.00 593.10,207.90 589.70,211.30" fill="#d3d3d3" stroke="#646464" stroke-width="1" stroke-linejoin="round" />
<polygon points="589.70,211.30 593.10,207.90 593.10,222.80 589.70,226.20" fill="#fff" stroke="#646464" stroke-width="1" stroke-linejoin="round" />
<polygon points="581.30,196.40 584.70,193.00 593.10,193.00 589.70,196.40" fill="#d3d3d3" stroke="#646464" stroke-width="1" stroke-linejoin="round" />
<line x1="616.50" y1="192.20" x2="616.50" y2="216.60" stroke="#666" stroke-width="1" />
<line x1="616.50" y1="216.60" x2="610.70" y2="223.00" stroke="#777" stroke-width="1.2" />
<rect x="619.90" y="196.75" width="7.60" height="22.45" fill="#d3d3d3" stroke="#646464" stroke-width="1" />
<rect x="619.90" y="219.20" width="7.60" height="7.00" fill="#fff" stroke="#646464" stroke-width="1" />
<polygon points="627.50,196.75 630.90,193.35 630.90,215.80 627.50,219.20" fill="#d3d3d3" stroke="#646464" stroke-width="1" stroke-linejoin="round" />
<polygon points="627.50,219.20 630.90,215.80 630.90,222.80 627.50,226.20" fill="#fff" stroke="#646464" stroke-width="1" stroke-linejoin="round" />
<polygon points="619.90,196.75 623.30,193.35 630.90,193.35 627.50,196.75" fill="#d3d3d3" stroke="#646464" stroke-width="1" stroke-linejoin="round" />
<rect x="635.10" y="196.75" width="8.40" height="14.55" fill="#d3d3d3" stroke="#646464" stroke-width="1" />
<rect x="635.10" y="211.30" width="8.40" height="14.90" fill="#fff" stroke="#646464" stroke-width="1" />
<polygon points="643.50,196.75 646.90,193.35 646.90,207.90 643.50,211.30" fill="#d3d3d3" stroke="#646464" stroke-width="1" stroke-linejoin="round" />
<polygon points="643.50,211.30 646.90,207.90 646.90,222.80 643.50,226.20" fill="#fff" stroke="#646464" stroke-width="1" stroke-linejoin="round" />
<polygon points="635.10,196.75 638.50,193.35 646.90,193.35 643.50,196.75" fill="#d3d3d3" stroke="#646464" stroke-width="1" stroke-linejoin="round" />
<line x1="668.30" y1="192.20" x2="668.30" y2="216.60" stroke="#666" stroke-width="1" />
<line x1="668.30" y1="216.60" x2="662.50" y2="223.00" stroke="#777" stroke-width="1.2" />
<rect x="674.90" y="196.60" width="5.70" height="25.40" fill="#d3d3d3" stroke="#646464" stroke-width="1" />
<polygon points="680.60,196.60 683.00,194.20 683.00,219.60 680.60,222.00" fill="#d3d3d3" stroke="#646464" stroke-width="1" stroke-linejoin="round" />
<polygon points="674.90,196.60 677.30,194.20 683.00,194.20 680.60,196.60" fill="#d3d3d3" stroke="#646464" stroke-width="1" stroke-linejoin="round" />
<rect x="691.70" y="196.60" width="5.90" height="24.80" fill="#d3d3d3" stroke="#646464" stroke-width="1" />
<polygon points="697.60,196.60 700.00,194.20 700.00,219.00 697.60,221.40" fill="#d3d3d3" stroke="#646464" stroke-width="1" stroke-linejoin="round" />
<polygon points="691.70,196.60 694.10,194.20 700.00,194.20 697.60,196.60" fill="#d3d3d3" stroke="#646464" stroke-width="1" stroke-linejoin="round" />
<rect x="667.20" y="209.00" width="6.60" height="17.20" fill="#fff" stroke="#646464" stroke-width="1" />
<polygon points="673.80,209.00 676.20,206.60 676.20,223.80 673.80,226.20" fill="#fff" stroke="#646464" stroke-width="1" stroke-linejoin="round" />
<polygon points="667.20,209.00 669.60,206.60 676.20,206.60 673.80,209.00" fill="#fff" stroke="#646464" stroke-width="1" stroke-linejoin="round" />
<rect x="684.80" y="202.10" width="6.40" height="24.10" fill="#fff" stroke="#646464" stroke-width="1" />
<polygon points="691.20,202.10 693.60,199.70 693.60,223.80 691.20,226.20" fill="#fff" stroke="#646464" stroke-width="1" stroke-linejoin="round" />
<polygon points="684.80,202.10 687.20,199.70 693.60,199.70 691.20,202.10" fill="#fff" stroke="#646464" stroke-width="1" stroke-linejoin="round" />
<rect x="503.40" y="268.50" width="19.85" height="6.50" fill="#fff" stroke="#646464" stroke-width="1" />
<rect x="503.40" y="275.00" width="29.00" height="7.20" fill="#d3d3d3" stroke="#646464" stroke-width="1" />
<rect x="503.40" y="285.30" width="26.30" height="6.10" fill="#fff" stroke="#646464" stroke-width="1" />
<rect x="503.40" y="291.40" width="19.85" height="6.85" fill="#d3d3d3" stroke="#646464" stroke-width="1" />
<line x1="503.40" y1="267.00" x2="503.40" y2="301.80" stroke="#646464" stroke-width="1" />
<line x1="502.90" y1="301.30" x2="541.90" y2="301.30" stroke="#646464" stroke-width="1" />
<rect x="557.90" y="270.75" width="10.00" height="9.65" fill="#fff" stroke="#646464" stroke-width="1" />
<rect x="567.90" y="270.75" width="16.80" height="9.65" fill="#d3d3d3" stroke="#646464" stroke-width="1" />
<rect x="557.90" y="287.25" width="15.80" height="9.15" fill="#fff" stroke="#646464" stroke-width="1" />
<rect x="573.70" y="287.25" width="16.80" height="9.15" fill="#d3d3d3" stroke="#646464" stroke-width="1" />
<line x1="557.90" y1="267.00" x2="557.90" y2="301.80" stroke="#646464" stroke-width="1" />
<line x1="557.40" y1="301.30" x2="596.90" y2="301.30" stroke="#646464" stroke-width="1" />
<rect x="611.00" y="270.75" width="10.40" height="9.65" fill="#fff" stroke="#646464" stroke-width="1" />
<rect x="621.40" y="270.75" width="22.60" height="9.65" fill="#d3d3d3" stroke="#646464" stroke-width="1" />
<rect x="611.00" y="287.25" width="16.50" height="9.15" fill="#fff" stroke="#646464" stroke-width="1" />
<rect x="627.50" y="287.25" width="16.50" height="9.15" fill="#d3d3d3" stroke="#646464" stroke-width="1" />
<line x1="611.00" y1="267.00" x2="611.00" y2="301.80" stroke="#646464" stroke-width="1" />
<line x1="610.50" y1="301.30" x2="649.20" y2="301.30" stroke="#646464" stroke-width="1" />
<line x1="507.50" y1="340.40" x2="507.50" y2="375.20" stroke="#666" stroke-width="1" />
<line x1="507.50" y1="375.20" x2="541.90" y2="375.20" stroke="#666" stroke-width="1" />
<line x1="507.50" y1="375.20" x2="503.40" y2="379.40" stroke="#777" stroke-width="1.1" />
<rect x="504.50" y="367.10" width="18.30" height="6.15" fill="#d3d3d3" stroke="#646464" stroke-width="1" />
<polygon points="504.50,367.10 507.50,364.10 525.80,364.10 522.80,367.10" fill="#d3d3d3" stroke="#646464" stroke-width="1" stroke-linejoin="round" />
<polygon points="522.80,367.10 525.80,364.10 525.80,370.25 522.80,373.25" fill="#d3d3d3" stroke="#646464" stroke-width="1" stroke-linejoin="round" />
<rect x="504.50" y="361.80" width="22.90" height="5.30" fill="#fff" stroke="#646464" stroke-width="1" />
<polygon points="504.50,361.80 507.50,358.80 530.40,358.80 527.40,361.80" fill="#fff" stroke="#646464" stroke-width="1" stroke-linejoin="round" />
<polygon points="527.40,361.80 530.40,358.80 530.40,364.10 527.40,367.10" fill="#fff" stroke="#646464" stroke-width="1" stroke-linejoin="round" />
<rect x="504.50" y="351.10" width="25.90" height="5.30" fill="#d3d3d3" stroke="#646464" stroke-width="1" />
<polygon points="504.50,351.10 507.50,348.10 533.40,348.10 530.40,351.10" fill="#d3d3d3" stroke="#646464" stroke-width="1" stroke-linejoin="round" />
<polygon points="530.40,351.10 533.40,348.10 533.40,353.40 530.40,356.40" fill="#d3d3d3" stroke="#646464" stroke-width="1" stroke-linejoin="round" />
<rect x="504.50" y="345.75" width="16.80" height="5.35" fill="#fff" stroke="#646464" stroke-width="1" />
<polygon points="504.50,345.75 507.50,342.75 524.30,342.75 521.30,345.75" fill="#fff" stroke="#646464" stroke-width="1" stroke-linejoin="round" />
<polygon points="521.30,345.75 524.30,342.75 524.30,348.10 521.30,351.10" fill="#fff" stroke="#646464" stroke-width="1" stroke-linejoin="round" />
<line x1="563.30" y1="340.40" x2="563.30" y2="375.20" stroke="#666" stroke-width="1" />
<line x1="563.30" y1="375.20" x2="593.00" y2="375.20" stroke="#666" stroke-width="1" />
<line x1="563.30" y1="375.20" x2="560.20" y2="377.80" stroke="#777" stroke-width="1.1" />
<rect x="558.40" y="363.30" width="14.80" height="8.10" fill="#fff" stroke="#646464" stroke-width="1" />
<rect x="573.20" y="363.30" width="13.80" height="8.10" fill="#d3d3d3" stroke="#646464" stroke-width="1" />
<polygon points="558.40,363.30 562.00,359.70 576.80,359.70 573.20,363.30" fill="#fff" stroke="#646464" stroke-width="1" stroke-linejoin="round" />
<polygon points="573.20,363.30 576.80,359.70 590.60,359.70 587.00,363.30" fill="#d3d3d3" stroke="#646464" stroke-width="1" stroke-linejoin="round" />
<polygon points="587.00,363.30 590.60,359.70 590.60,367.80 587.00,371.40" fill="#d3d3d3" stroke="#646464" stroke-width="1" stroke-linejoin="round" />
<rect x="558.40" y="348.00" width="7.90" height="7.70" fill="#fff" stroke="#646464" stroke-width="1" />
<rect x="566.30" y="348.00" width="15.00" height="7.70" fill="#d3d3d3" stroke="#646464" stroke-width="1" />
<polygon points="558.40,348.00 562.00,344.40 569.90,344.40 566.30,348.00" fill="#fff" stroke="#646464" stroke-width="1" stroke-linejoin="round" />
<polygon points="566.30,348.00 569.90,344.40 584.90,344.40 581.30,348.00" fill="#d3d3d3" stroke="#646464" stroke-width="1" stroke-linejoin="round" />
<polygon points="581.30,348.00 584.90,344.40 584.90,352.10 581.30,355.70" fill="#d3d3d3" stroke="#646464" stroke-width="1" stroke-linejoin="round" />
<line x1="616.50" y1="340.40" x2="616.50" y2="375.20" stroke="#666" stroke-width="1" />
<line x1="616.50" y1="375.20" x2="646.60" y2="375.20" stroke="#666" stroke-width="1" />
<line x1="616.50" y1="375.20" x2="613.40" y2="377.80" stroke="#777" stroke-width="1.1" />
<rect x="612.20" y="363.30" width="15.60" height="8.10" fill="#fff" stroke="#646464" stroke-width="1" />
<rect x="627.80" y="363.30" width="13.80" height="8.10" fill="#d3d3d3" stroke="#646464" stroke-width="1" />
<polygon points="612.20,363.30 615.80,359.70 631.40,359.70 627.80,363.30" fill="#fff" stroke="#646464" stroke-width="1" stroke-linejoin="round" />
<polygon points="627.80,363.30 631.40,359.70 645.20,359.70 641.60,363.30" fill="#d3d3d3" stroke="#646464" stroke-width="1" stroke-linejoin="round" />
<polygon points="641.60,363.30 645.20,359.70 645.20,367.80 641.60,371.40" fill="#d3d3d3" stroke="#646464" stroke-width="1" stroke-linejoin="round" />
<rect x="612.20" y="348.00" width="7.40" height="7.70" fill="#fff" stroke="#646464" stroke-width="1" />
<rect x="619.60" y="348.00" width="22.00" height="7.70" fill="#d3d3d3" stroke="#646464" stroke-width="1" />
<polygon points="612.20,348.00 615.80,344.40 623.20,344.40 619.60,348.00" fill="#fff" stroke="#646464" stroke-width="1" stroke-linejoin="round" />
<polygon points="619.60,348.00 623.20,344.40 645.20,344.40 641.60,348.00" fill="#d3d3d3" stroke="#646464" stroke-width="1" stroke-linejoin="round" />
<polygon points="641.60,348.00 645.20,344.40 645.20,352.10 641.60,355.70" fill="#d3d3d3" stroke="#646464" stroke-width="1" stroke-linejoin="round" />
<line x1="500.20" y1="393.00" x2="500.20" y2="406.20" stroke="#666" stroke-width="1" />
<line x1="499.70" y1="405.80" x2="514.00" y2="405.80" stroke="#666" stroke-width="1" />
<rect x="502.20" y="399.50" width="2.40" height="5.90" fill="#fff" stroke="#666" stroke-width="0.9" />
<rect x="505.40" y="396.20" width="2.40" height="9.20" fill="#fff" stroke="#666" stroke-width="0.9" />
<rect x="508.60" y="398.20" width="2.40" height="7.20" fill="#fff" stroke="#666" stroke-width="0.9" />
<rect x="511.80" y="395.40" width="1.80" height="10.00" fill="#fff" stroke="#666" stroke-width="0.9" /></svg>
</body>
</html>
